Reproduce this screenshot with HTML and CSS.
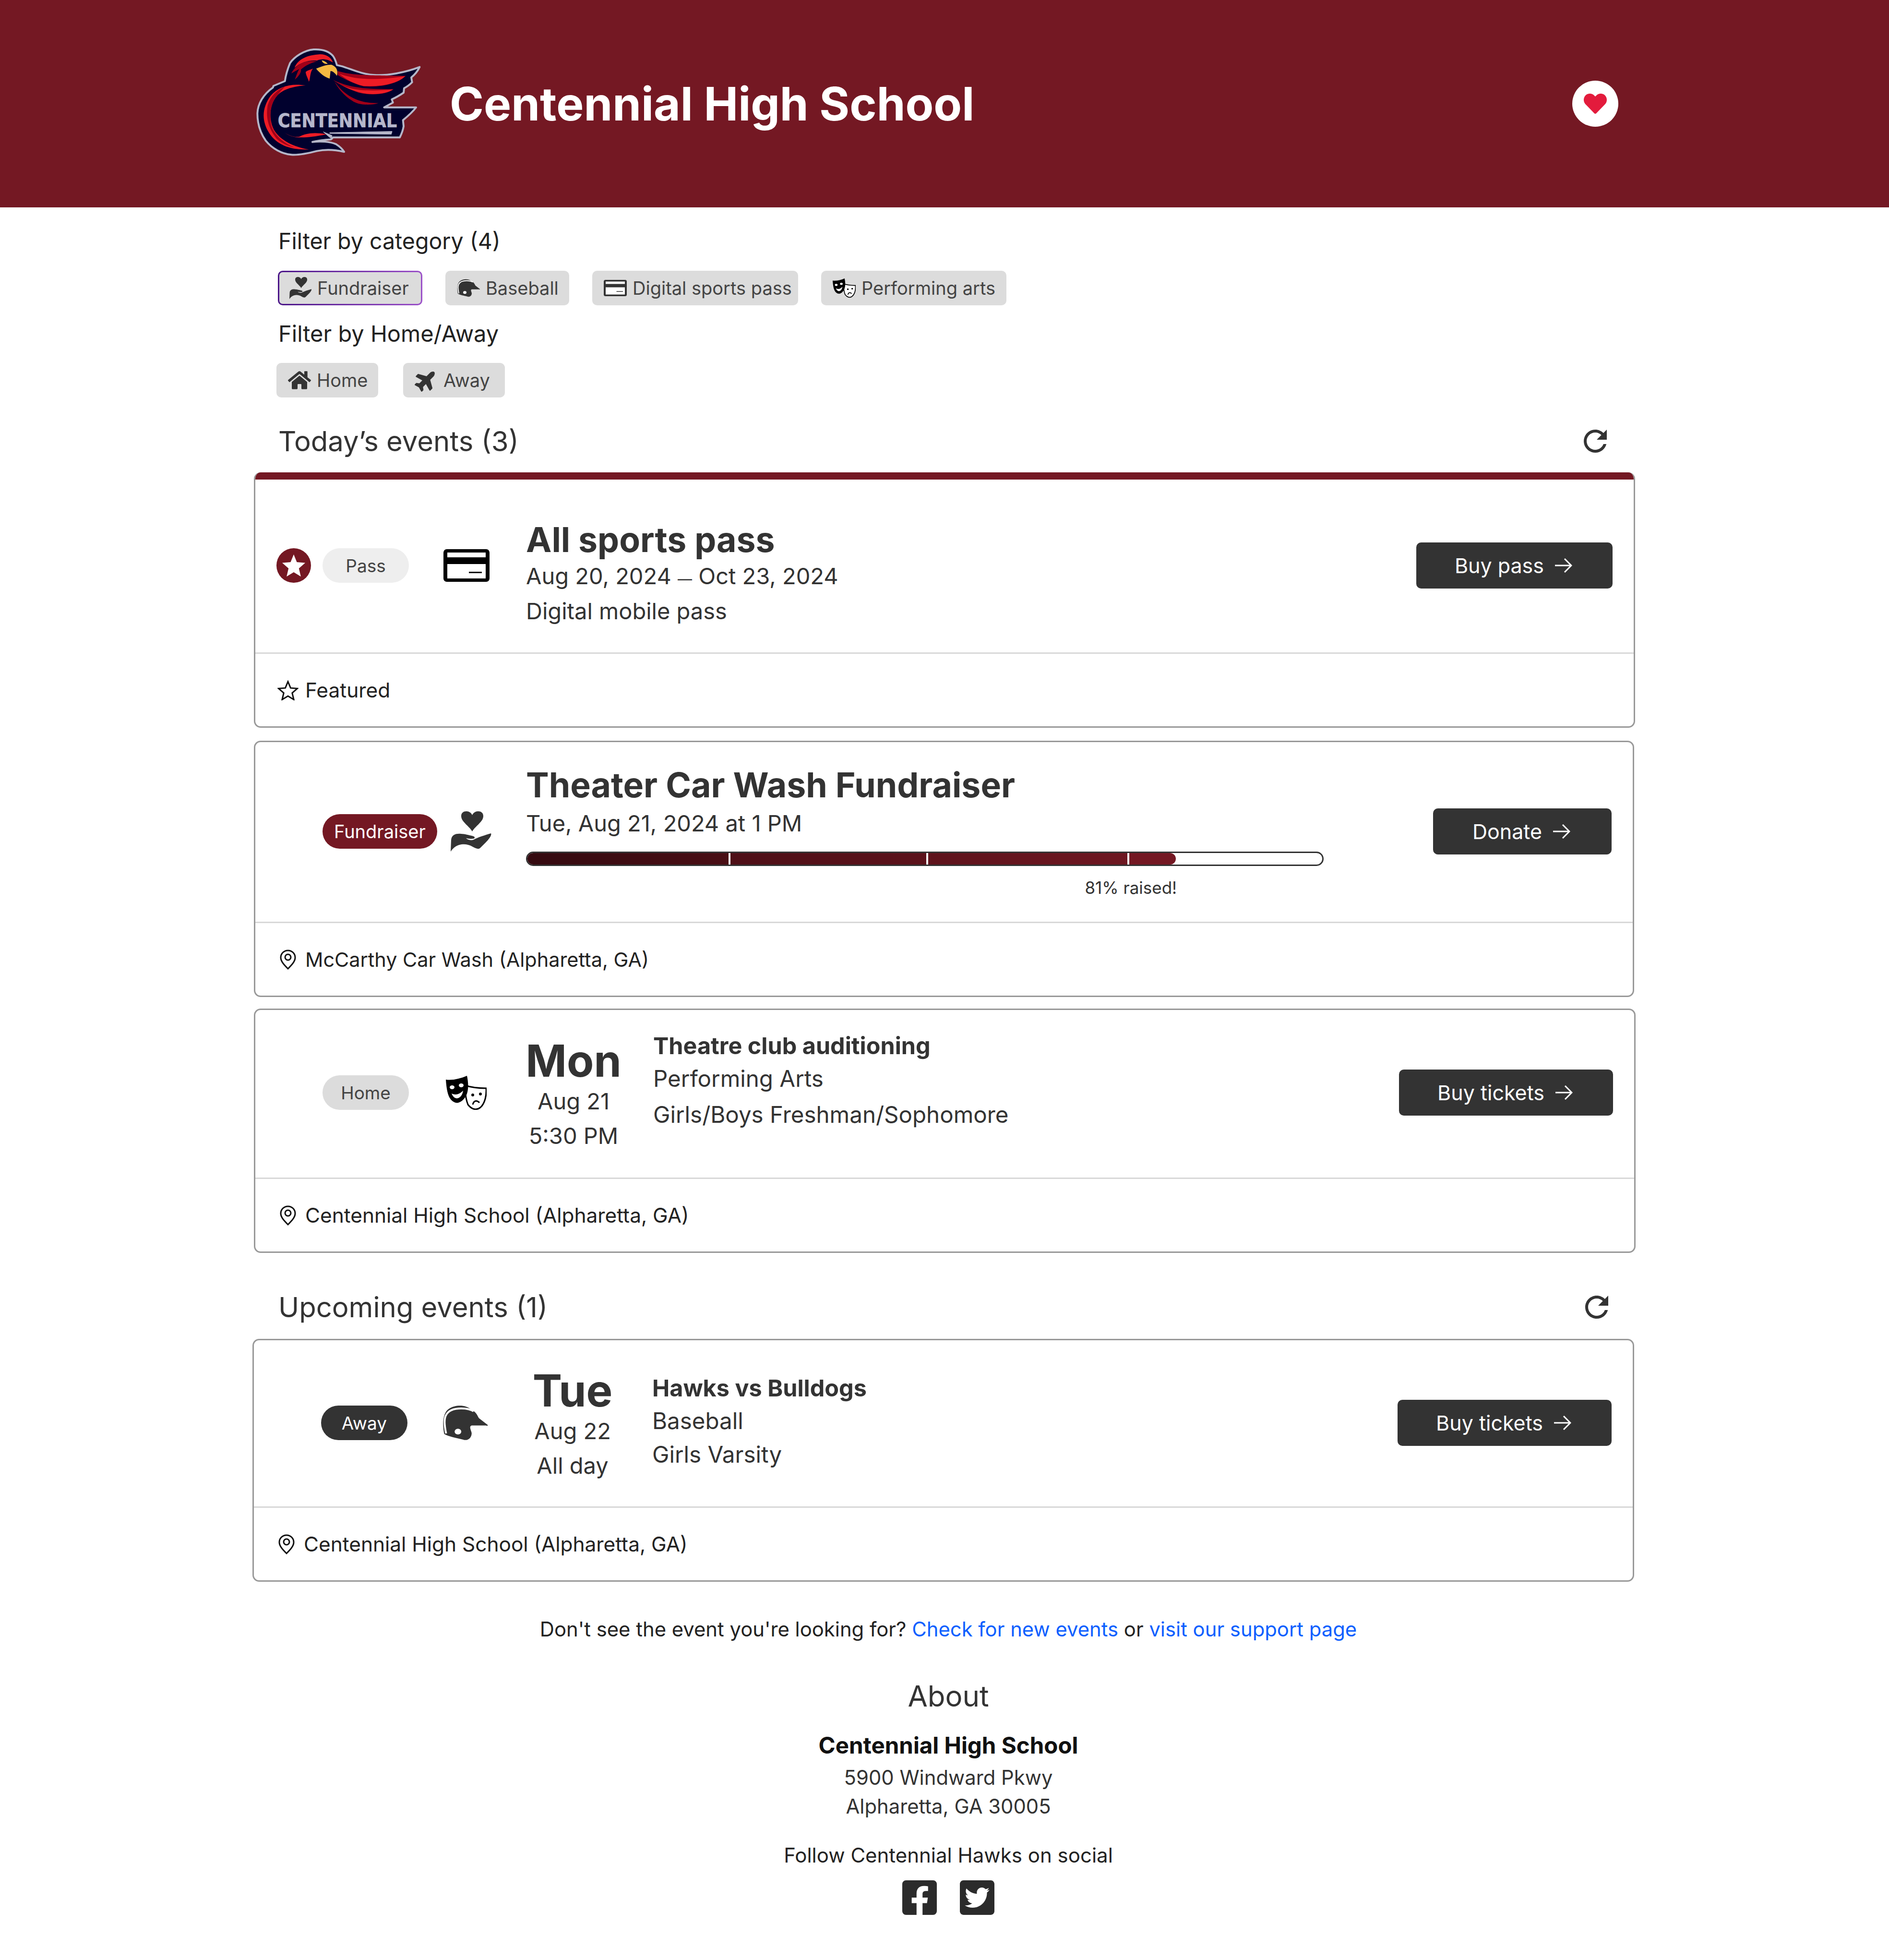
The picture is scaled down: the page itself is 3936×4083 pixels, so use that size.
FILE: index.html
```html
<!DOCTYPE html>
<html lang="en">
<head>
<meta charset="utf-8">
<title>Centennial High School</title>
<link rel="stylesheet" href="styles.css">
</head>
<body>
<svg class="defs" width="0" height="0" aria-hidden="true">
  <defs>
    <symbol id="i-hand" viewBox="0 0 88 84">
      <path d="M45 42C38 30 22 22 22 10C22 3 27 0 33 0C38 0 43 3 45 8C47 3 52 0 57 0C63 0 68 3 68 10C68 22 52 30 45 42Z"/>
      <path d="M0 84L1 60C2 48 12 46 22 47C30 47 38 50 44 51C50 52 52 55 48 57C42 58 36 57 32 56C36 60 44 62 50 58C58 54 70 50 84 46C86 50 80 58 74 64L62 76C58 80 54 78 46 74C36 68 26 68 18 70C10 72 4 78 0 84Z"/>
    </symbol>
    <symbol id="i-helmet" viewBox="0 0 96 73">
      <path d="M4 60C0 40 0 15 15 6C28-2 50-2 60 8C74 14 75 25 78 27L96 41C96 43 95 43 92 42L62 42C56 44 60 50 62 58C62 70 52 75 44 72C30 68 14 66 4 60Z"/>
      <path d="M8 59C5 45 3 28 8 20C14 8 30 6 40 6C50 6 60 8 66 12" fill="none" stroke="#fff" stroke-width="4"/>
      <ellipse cx="33" cy="55" rx="7" ry="6" fill="#fff"/>
    </symbol>
    <symbol id="i-card" viewBox="0 0 96 68">
      <rect width="96" height="68" rx="7"/>
      <rect x="8" y="7" width="80" height="10" fill="#fff"/>
      <rect x="8" y="31" width="80" height="30" fill="#fff"/>
      <rect x="53" y="47" width="27" height="3"/>
    </symbol>
    <symbol id="i-masks" viewBox="0 0 85 71">
      <path d="M40 20C52 24 66 26 84 26C85 42 81 58 72 66C62 74 52 68 46 60C42 50 40 34 40 20Z" fill="#fff" stroke="#000" stroke-width="3"/>
      <path d="M0 8C14 10 30 6 44 0C47 15 48 30 42 42C36 52 28 58 20 56C8 52 2 40 0 8Z" fill="#000"/>
      <ellipse cx="13" cy="24" rx="5" ry="4" fill="#fff"/>
      <ellipse cx="32" cy="20" rx="5" ry="4" fill="#fff"/>
      <path d="M12 37C20 41 28 39 36 31C34 43 28 47 22 47C17 46 14 42 12 37Z" fill="#fff"/>
      <circle cx="56" cy="40" r="3"/><circle cx="72" cy="38" r="3"/>
      <path d="M56 60C58 52 64 50 70 56" fill="none" stroke="#000" stroke-width="3"/>
    </symbol>
    <symbol id="i-home" viewBox="0 0 576 512">
      <path d="M280.37 148.26L96 300.11V464a16 16 0 0 0 16 16l112.06-.29a16 16 0 0 0 15.92-16V368a16 16 0 0 1 16-16h64a16 16 0 0 1 16 16v95.64a16 16 0 0 0 16 16.05L464 480a16 16 0 0 0 16-16V300L295.67 148.26a12.19 12.19 0 0 0-15.3 0zM571.6 251.47L488 182.56V44.05a12 12 0 0 0-12-12h-56a12 12 0 0 0-12 12v72.61L318.47 43a48 48 0 0 0-61 0L4.34 251.47a12 12 0 0 0-1.6 16.9l25.5 31A12 12 0 0 0 45.15 301l235.22-193.74a12.19 12.19 0 0 1 15.3 0L530.9 301a12 12 0 0 0 16.9-1.6l25.5-31a12 12 0 0 0-1.7-16.93z"/>
    </symbol>
    <symbol id="i-plane" viewBox="0 -30 576 572">
      <path transform="rotate(-45 288 256)" d="M480 192H365.71L260.61 8.06A16.014 16.014 0 0 0 246.71 0h-65.5c-10.63 0-18.3 10.17-15.38 20.39L214.86 192H112l-43.2-57.6c-3.02-4.03-7.77-6.4-12.8-6.4H16.01C5.6 128-2.04 137.78.49 147.88L32 256 .49 364.12C-2.04 374.22 5.6 384 16.01 384H56c5.04 0 9.78-2.37 12.8-6.4L112 320h102.86l-49.03 171.6c-2.92 10.22 4.75 20.4 15.38 20.4h65.5c5.74 0 11.04-3.08 13.89-8.06L365.71 320H480c35.35 0 96-28.65 96-64s-60.65-64-96-64z"/>
    </symbol>
    <symbol id="i-refresh" viewBox="0 0 24 24">
      <path d="M17.65 6.35C16.2 4.9 14.21 4 12 4c-4.42 0-7.99 3.58-7.99 8s3.57 8 7.99 8c3.73 0 6.84-2.55 7.73-6h-2.08c-.82 2.33-3.04 4-5.65 4-3.31 0-6-2.69-6-6s2.69-6 6-6c1.66 0 3.14.69 4.22 1.78L13 11h7V4l-2.35 2.35z"/>
    </symbol>
    <symbol id="i-pin" viewBox="0 0 34 42">
      <path d="M17 2C8.5 2 2 8.500 2 17C2 25 10 33 17 40C24 33 32 25 32 17C32 8.500 25.500 2 17 2Z" fill="none" stroke="#111" stroke-width="3"/>
      <circle cx="17" cy="16" r="6" fill="none" stroke="#111" stroke-width="3"/>
    </symbol>
    <symbol id="i-arrow" viewBox="0 0 37 30">
      <path d="M1 15H35M21 1L35 15L21 29" fill="none" stroke="#fff" stroke-width="3"/>
    </symbol>
  </defs>
</svg>

<header class="site-header">
  <svg class="logo" viewBox="155 115 1050 690" role="img" aria-label="Centennial Hawks logo">
    <path class="logo-body" d="M520 130C560 128 610 135 640 170C655 190 660 210 665 228L700 236C760 255 820 285 900 290C980 295 1090 275 1182 240C1170 265 1155 285 1130 305L1135 335C1120 350 1105 362 1085 372L1082 400C1060 415 1035 430 1008 442L1015 462L960 492L1160 492C1135 525 1105 550 1078 572L1082 610C1078 635 1068 660 1058 680L640 680L628 692C590 695 550 698 512 708C560 702 620 705 660 722C680 735 698 750 710 770C660 758 600 752 540 765C490 778 430 792 380 788C320 782 260 750 220 700C185 650 168 590 168 530C170 470 205 410 265 368L268 358L340 328C345 290 358 250 372 215C400 175 460 135 520 130Z"/>
    <path class="logo-red" d="M470 355C380 340 300 360 250 420C200 490 190 570 240 650C290 730 380 760 490 755C400 740 310 700 270 630C240 570 240 480 290 420C330 375 400 360 470 355Z"/>
    <path class="logo-dark" d="M340 362C290 385 250 420 232 480C218 560 240 630 290 690C320 715 360 735 400 742C340 720 290 680 262 625C240 570 240 480 290 420C310 395 325 378 340 362Z"/>
    <path class="logo-red" d="M335 648C380 680 430 695 600 660C520 645 470 655 430 675C400 680 370 670 335 648Z"/>
    <path class="logo-dark" d="M670 265C760 290 800 290 1095 295C1050 340 950 370 830 360C770 345 700 310 670 290Z"/>
    <path class="logo-red" d="M680 282C760 310 860 330 1090 298C1050 340 950 365 830 358C770 345 720 315 680 282Z"/>
    <path class="logo-dark" d="M640 320C740 370 850 380 1020 378C980 410 880 420 800 400C740 380 680 350 640 320Z"/>
    <path class="logo-red" d="M660 330C710 370 800 400 1015 380C975 410 880 418 805 398C750 382 700 360 660 330Z"/>
    <path class="logo-dark" d="M650 330C700 400 780 470 925 465C880 480 800 480 760 450C710 420 670 370 650 330Z"/>
    <path class="logo-dark" d="M380 280C410 220 470 195 540 205C500 215 470 230 440 255C445 270 425 300 402 318C415 285 420 265 430 252C410 262 395 270 380 280Z"/>
    <path class="logo-red" d="M400 245C420 190 480 165 560 160C600 160 630 180 640 212C610 190 570 185 540 200C490 195 440 210 400 245Z"/>
    <path class="logo-red" d="M470 270C480 262 495 258 515 250C495 275 500 310 490 332C485 310 470 290 470 270Z"/>
    <path class="logo-gold" d="M535 250C570 235 600 225 630 225C660 235 675 260 665 295C655 280 640 265 625 265L620 312C590 305 560 280 535 250Z"/>
    <path class="logo-gold" d="M570 198C585 200 598 208 608 220C590 222 575 215 570 198Z"/>
    <path class="logo-line" d="M620 650L1010 642L1005 660L620 655Z"/>
    <path class="logo-line" d="M510 710C550 695 590 690 640 690L620 680L580 645L635 668L630 690"/>
    <text class="logo-text" x="295" y="616" textLength="745" lengthAdjust="spacingAndGlyphs">CENTENNIAL</text>
  </svg>
  <h1 class="school-name">Centennial High School</h1>
  <button class="fav" type="button" aria-label="Favorite">
    <svg class="fav-heart" viewBox="0 0 512 512"><path d="M462.3 62.6C407.5 15.900 326 24.300 275.700 76.200L256 96.500l-19.700-20.300C186.100 24.300 104.500 15.900 49.700 62.600c-62.800 53.600-66.100 149.800-9.900 207.900l193.500 199.800c12.500 12.900 32.800 12.900 45.300 0l193.500-199.800c56.300-58.100 53-154.300-9.800-207.900z"/></svg>
  </button>
</header>

<main class="main">
  <h2 class="filter-label filter-label-first">Filter by category (4)</h2>
  <div class="chips chips-cat">
    <span class="chip chip-active chip-fund"><svg class="chip-icon"><use href="#i-hand"/></svg>Fundraiser</span>
    <span class="chip chip-base"><svg class="chip-icon"><use href="#i-helmet"/></svg>Baseball</span>
    <span class="chip chip-digital"><svg class="chip-icon"><use href="#i-card"/></svg>Digital sports pass</span>
    <span class="chip chip-perf"><svg class="chip-icon chip-icon-black"><use href="#i-masks"/></svg>Performing arts</span>
  </div>
  <h2 class="filter-label filter-label-second">Filter by Home/Away</h2>
  <div class="chips chips-home">
    <span class="chip chip-loc"><svg class="chip-icon"><use href="#i-home"/></svg>Home</span>
    <span class="chip chip-loc"><svg class="chip-icon"><use href="#i-plane"/></svg>Away</span>
  </div>

  <div class="section-head section-head-today">
    <h2 class="section-title">Today’s events (3)</h2>
    <svg class="refresh"><use href="#i-refresh"/></svg>
  </div>

  <article class="card card-featured">
    <div class="card-main main-pass">
      <div class="slot">
        <svg class="star-badge" viewBox="0 0 72 72"><circle cx="36" cy="36" r="36" fill="#741823"/><path d="M36 13L42.500 29L60 30.500L46.800 42L50.800 59L36 50L21.200 59L25.200 42L12 30.500L29.500 29Z" fill="#fff"/></svg>
      </div>
      <div class="tag-col"><span class="pill pill-light">Pass</span></div>
      <svg class="type-icon icon-black"><use href="#i-card"/></svg>
      <div class="content content-pass">
        <h3 class="title">All sports pass</h3>
        <p class="line line-date">Aug 20, 2024 <span class="dash">—</span> Oct 23, 2024</p>
        <p class="line">Digital mobile pass</p>
      </div>
      <a class="btn">Buy pass<svg class="arrow"><use href="#i-arrow"/></svg></a>
    </div>
    <div class="card-foot"><svg class="foot-star" viewBox="0 0 44 42"><path d="M22 3L27.500 16.200L41.500 17.300L30.800 26.600L34.100 40.300L22 33L9.900 40.300L13.200 26.600L2.500 17.300L16.500 16.200Z" fill="none" stroke="#111" stroke-width="3"/></svg>Featured</div>
  </article>

  <article class="card card-fund">
    <div class="card-main main-fund">
      <div class="slot"></div>
      <div class="tag-col"><span class="pill pill-maroon">Fundraiser</span></div>
      <svg class="hand-icon"><use href="#i-hand"/></svg>
      <div class="content content-fund">
        <h3 class="title">Theater Car Wash Fundraiser</h3>
        <p class="line line-fund">Tue, Aug 21, 2024 at 1 PM</p>
        <div class="progress-wrap">
          <div class="progress">
            <div class="progress-fill" style="width:81.6%">
              <span class="seg seg-1"></span><span class="seg seg-2"></span><span class="seg seg-3"></span><span class="seg seg-4"></span>
            </div>
          </div>
          <p class="raised" style="width:81.6%">81% raised!</p>
        </div>
      </div>
      <a class="btn btn-donate">Donate<svg class="arrow"><use href="#i-arrow"/></svg></a>
    </div>
    <div class="card-foot card-foot-narrow"><svg class="pin"><use href="#i-pin"/></svg>McCarthy Car Wash (Alpharetta, GA)</div>
  </article>

  <article class="card card-theatre">
    <div class="card-main main-theatre">
      <div class="slot"></div>
      <div class="tag-col"><span class="pill pill-grey">Home</span></div>
      <svg class="masks-icon icon-black"><use href="#i-masks"/></svg>
      <div class="date-col">
        <div class="day">Mon</div>
        <div class="date-line">Aug 21</div>
        <div class="date-line">5:30 PM</div>
      </div>
      <div class="detail detail-theatre">
        <h3 class="detail-title">Theatre club auditioning</h3>
        <p class="detail-line">Performing Arts</p>
        <p class="detail-line detail-line-last">Girls/Boys Freshman/Sophomore</p>
      </div>
      <a class="btn">Buy tickets<svg class="arrow"><use href="#i-arrow"/></svg></a>
    </div>
    <div class="card-foot"><svg class="pin"><use href="#i-pin"/></svg>Centennial High School (Alpharetta, GA)</div>
  </article>

  <div class="section-head section-head-upcoming">
    <h2 class="section-title">Upcoming events (1)</h2>
    <svg class="refresh"><use href="#i-refresh"/></svg>
  </div>

  <article class="card card-away">
    <div class="card-main main-away">
      <div class="slot"></div>
      <div class="tag-col"><span class="pill pill-dark">Away</span></div>
      <svg class="type-icon"><use href="#i-helmet"/></svg>
      <div class="date-col">
        <div class="day">Tue</div>
        <div class="date-line">Aug 22</div>
        <div class="date-line">All day</div>
      </div>
      <div class="detail detail-away">
        <h3 class="detail-title">Hawks vs Bulldogs</h3>
        <p class="detail-line">Baseball</p>
        <p class="detail-line detail-line-away">Girls Varsity</p>
      </div>
      <a class="btn">Buy tickets<svg class="arrow"><use href="#i-arrow"/></svg></a>
    </div>
    <div class="card-foot"><svg class="pin"><use href="#i-pin"/></svg>Centennial High School (Alpharetta, GA)</div>
  </article>
</main>

<footer class="site-foot">
  <p class="help">Don't see the event you're looking for? <a class="link">Check for new events</a> or <a class="link">visit our support page</a></p>
  <h2 class="about">About</h2>
  <p class="about-name">Centennial High School</p>
  <p class="addr">5900 Windward Pkwy</p>
  <p class="addr">Alpharetta, GA 30005</p>
  <p class="follow">Follow Centennial Hawks on social</p>
  <div class="social">
    <svg class="social-icon" viewBox="0 32 448 448"><path d="M400 32H48A48 48 0 0 0 0 80v352a48 48 0 0 0 48 48h137.250V327.690h-63V256h63v-54.640c0-62.150 37-96.480 93.670-96.480 27.140 0 55.520 4.840 55.520 4.840v61h-31.270c-30.810 0-40.420 19.120-40.420 38.730V256h68.780l-11 71.690h-57.780V480H400a48 48 0 0 0 48-48V80a48 48 0 0 0-48-48z"/></svg>
    <svg class="social-icon" viewBox="0 32 448 448"><path d="M400 32H48C21.500 32 0 53.500 0 80v352c0 26.500 21.500 48 48 48h352c26.500 0 48-21.500 48-48V80c0-26.500-21.500-48-48-48zm-48.900 158.800c.2 2.800.2 5.700.2 8.500 0 86.700-66 186.600-186.600 186.600-37.200 0-71.700-10.800-100.700-29.400 5.300.6 10.400.8 15.800.8 30.700 0 58.900-10.400 81.400-28-28.800-.6-53-19.500-61.300-45.500 10.100 1.500 19.200 1.500 29.600-1.200-30-6.100-52.500-32.500-52.500-64.400v-.8c8.700 4.900 18.900 7.900 29.600 8.300a65.447 65.447 0 0 1-29.200-54.600c0-12.200 3.200-23.400 8.900-33.100 32.300 39.800 80.800 65.800 135.200 68.600-9.300-44.500 24-80.600 64-80.600 18.900 0 35.900 7.900 47.900 20.700 14.800-2.800 29-8.300 41.600-15.800-4.900 15.200-15.100 28-28.600 36 13.100-1.400 25.800-5.100 37.500-10.200-8.900 13-20 24.600-32.700 33.700z"/></svg>
  </div>
</footer>
</body>
</html>
```
FILE: styles.css
```css
* { box-sizing: border-box; }
html, body { margin: 0; padding: 0; }
body {
  width: 3936px;
  height: 4083px;
  overflow: hidden;
  background: #fff;
  color: #333;
  font-family: Inter, "Noto Sans", "Liberation Sans", sans-serif;
  font-size: 44px;
}
h1, h2, h3, p { margin: 0; font-weight: 400; }
.defs { position: absolute; }

/* Header */
.site-header {
  height: 432px;
  background: #741823;
  display: flex;
  align-items: center;
  padding: 0 564px 0 532px;
}
.logo { width: 350px; height: 230px; margin-bottom: 6px; flex: none; }
.logo-body { fill: #01012e; stroke: #b5b6c8; stroke-width: 12; stroke-linejoin: round; }
.logo-red { fill: #ee1c25; }
.logo-dark { fill: #a00018; }
.logo-gold { fill: #f5b942; }
.logo-line { fill: #b5b6c8; stroke: #b5b6c8; stroke-width: 3; }
.logo-text { font-family: "DejaVu Sans", sans-serif; font-weight: 700; font-size: 116px; fill: #b6b7cb; stroke: #b6b7cb; stroke-width: 2; }
.school-name { margin-left: 55px; font-size: 96px; font-weight: 700; color: #fff; line-height: 120px; }
.fav {
  margin-left: auto;
  width: 96px; height: 96px;
  border: 0; padding: 0;
  border-radius: 50%;
  background: #fff;
  display: flex; align-items: center; justify-content: center;
}
.fav-heart { width: 48px; height: 48px; fill: #e31b3c; }

/* Filters */
.main { margin-left: 526px; width: 2884px; }
.filter-label { margin-left: 54px; font-size: 46.5px; line-height: 70px; color: #222; }
.filter-label-first { padding-top: 35px; }
.filter-label-second { margin-top: 24px; font-size: 47px; }
.chips { display: flex; height: 72px; }
.chips-cat { margin: 27px 0 0 53px; gap: 48px; }
.chips-home { margin: 26px 0 0 50px; gap: 52px; }
.chip {
  display: flex; align-items: center;
  height: 72px;
  padding-left: 24px;
  gap: 12px;
  border-radius: 10px;
  background: #dcdcdc;
  color: #444;
  font-size: 38px;
  white-space: nowrap;
}
.chip-active {
  border: 3px solid transparent;
  background: linear-gradient(#dcdcdc, #dcdcdc) padding-box, linear-gradient(90deg, #4b1688, #9c52c9) border-box;
  padding-left: 21px;
  gap: 10px;
}
.chip-fund { width: 301px; }
.chip-base { width: 258px; }
.chip-digital { width: 429px; }
.chip-perf { width: 386px; }
.chip-loc { width: 212px; }
.chip-icon { width: 48px; height: 48px; fill: #333; flex: none; }
.chip-icon-black { fill: #000; }

/* Section headings */
.section-head { display: flex; justify-content: space-between; align-items: center; height: 80px; margin-left: 54px; }
.section-head-today { width: 2780px; margin-top: 51px; }
.section-head-upcoming { width: 2783px; margin-top: 73px; }
.section-title { font-size: 58px; line-height: 80px; color: #333; }
.refresh { width: 72px; height: 72px; fill: #333; flex: none; }

/* Cards */
.card {
  margin-left: 3px;
  width: 2878px;
  border: 3px solid #999;
  border-radius: 14px;
  background: #fff;
}
.card-featured { margin-top: 25px; border-top: 0; overflow: hidden; }
.card-featured::before { content: ""; display: block; height: 15px; background: #741823; margin: 0 -3px; }
.card-fund { margin-top: 27px; width: 2876px; }
.card-theatre { margin-top: 24px; width: 2879px; }
.card-away { margin-top: 26px; margin-left: 0; width: 2879px; }
.card-main {
  display: flex; align-items: center;
  padding: 0 44px;
  border-bottom: 3px solid #d8d8d8;
}
.main-pass { height: 363px; padding-bottom: 2px; }
.main-fund { height: 377px; padding-bottom: 3px; }
.main-theatre { height: 352px; padding-bottom: 5px; }
.main-away { height: 349px; padding-bottom: 2px; }
.slot { width: 96px; flex: none; display: flex; }
.star-badge { width: 72px; height: 72px; }
.tag-col { width: 252px; flex: none; display: flex; }
.pill {
  display: flex; align-items: center; justify-content: center;
  height: 72px; min-width: 180px;
  padding: 0 24px;
  border-radius: 36px;
  font-size: 37px;
}
.pill-light { background: #eee; color: #444; }
.pill-grey { background: #dcdcdc; color: #444; }
.pill-dark { background: #333; color: #fff; }
.pill-maroon { background: #741823; color: #fff; font-size: 38px; }
.type-icon { width: 96px; height: 72px; flex: none; fill: #333; }
.icon-black { fill: #000; }
.hand-icon { width: 88px; height: 84px; margin: 0 0 0 15px; flex: none; fill: #333; }
.masks-icon { width: 85px; height: 71px; margin: 0 5px; flex: none; }
.hand-icon + .content { margin-left: 69px; }
.content { flex: 1; align-self: flex-start; margin-left: 76px; min-width: 0; }
.content-pass { padding-top: 88px; }
.content-fund { padding-top: 52px; }
.title { font-size: 71.5px; font-weight: 700; line-height: 75px; color: #333; }
.line { font-size: 47px; line-height: 74px; color: #333; }
.line-date { line-height: 76px; margin-bottom: -8px; }
.dash { font-size: 30px; }
.line-fund { margin-top: 4px; line-height: 76px; }
.progress-wrap { width: 1662px; margin-top: 21px; }
.progress {
  height: 30px;
  border: 3px solid #333;
  border-radius: 15px;
  background: #fff;
  overflow: hidden;
}
.progress-fill { display: flex; height: 100%; gap: 4px; border-radius: 0 14px 14px 0; overflow: hidden; }
.seg { display: block; height: 100%; }
.seg-1 { width: 31%; background: linear-gradient(90deg, #340a10, #4a0e15); }
.seg-2 { width: 30.2%; background: linear-gradient(90deg, #4e0f17, #5c121b); }
.seg-3 { width: 30.7%; background: linear-gradient(90deg, #5e131c, #6e1721); }
.seg-4 { flex: 1; background: #741823; }
.raised { margin-top: 23px; text-align: right; font-size: 35px; line-height: 44px; color: #333; }
.date-col { width: 200px; flex: none; margin-left: 76px; align-self: flex-start; text-align: center; }
.main-theatre .date-col { padding-top: 58px; }
.main-away .date-col { padding-top: 57px; }
.day { font-size: 92px; font-weight: 700; line-height: 96px; color: #333; }
.date-line { font-size: 47px; line-height: 72px; color: #333; }
.detail { flex: 1; margin-left: 66px; align-self: flex-start; }
.detail-theatre { padding-top: 41px; }
.detail-away { padding-top: 66px; }
.detail-title { font-size: 48.5px; font-weight: 700; line-height: 68px; color: #333; }
.detail-line { font-size: 47.5px; line-height: 68px; color: #333; }
.detail-line-last { line-height: 82px; }
.detail-line-away { line-height: 72px; }
.btn {
  display: flex; align-items: center; justify-content: center;
  height: 96px;
  padding: 0 84px 0 80px;
  gap: 22px;
  border-radius: 10px;
  background: #333;
  color: #fff;
  font-size: 43px;
  flex: none;
}
.btn-donate { padding: 0 86px 0 82px; }
.arrow { width: 37px; height: 30px; flex: none; }
.card-foot {
  display: flex; align-items: center;
  height: 151px;
  padding-left: 46px;
  font-size: 42.4px;
  color: #222;
}
.card-foot-narrow { font-size: 41.4px; }
.foot-star { width: 44px; height: 42px; margin-right: 14px; flex: none; }
.pin { width: 34px; height: 42px; margin: 0 19px 0 5px; flex: none; }

/* Footer */
.site-foot { width: 3920px; margin-left: 16px; text-align: center; color: #333; }
.help { margin-top: 69px; font-size: 41.8px; line-height: 60px; color: #222; }
.link { color: #0d5fff; }
.about { margin-top: 69px; font-size: 60px; line-height: 80px; }
.about-name { margin-top: 30px; font-size: 47.5px; font-weight: 700; line-height: 66px; color: #111; }
.addr { font-size: 41.8px; line-height: 60px; }
.about-name + .addr { margin-top: 4px; }
.follow { margin-top: 42px; font-size: 42px; line-height: 60px; color: #222; }
.social { display: flex; justify-content: center; gap: 48px; margin-top: 22px; }
.social-icon { width: 72px; height: 72px; fill: #2b2b2b; }
```
